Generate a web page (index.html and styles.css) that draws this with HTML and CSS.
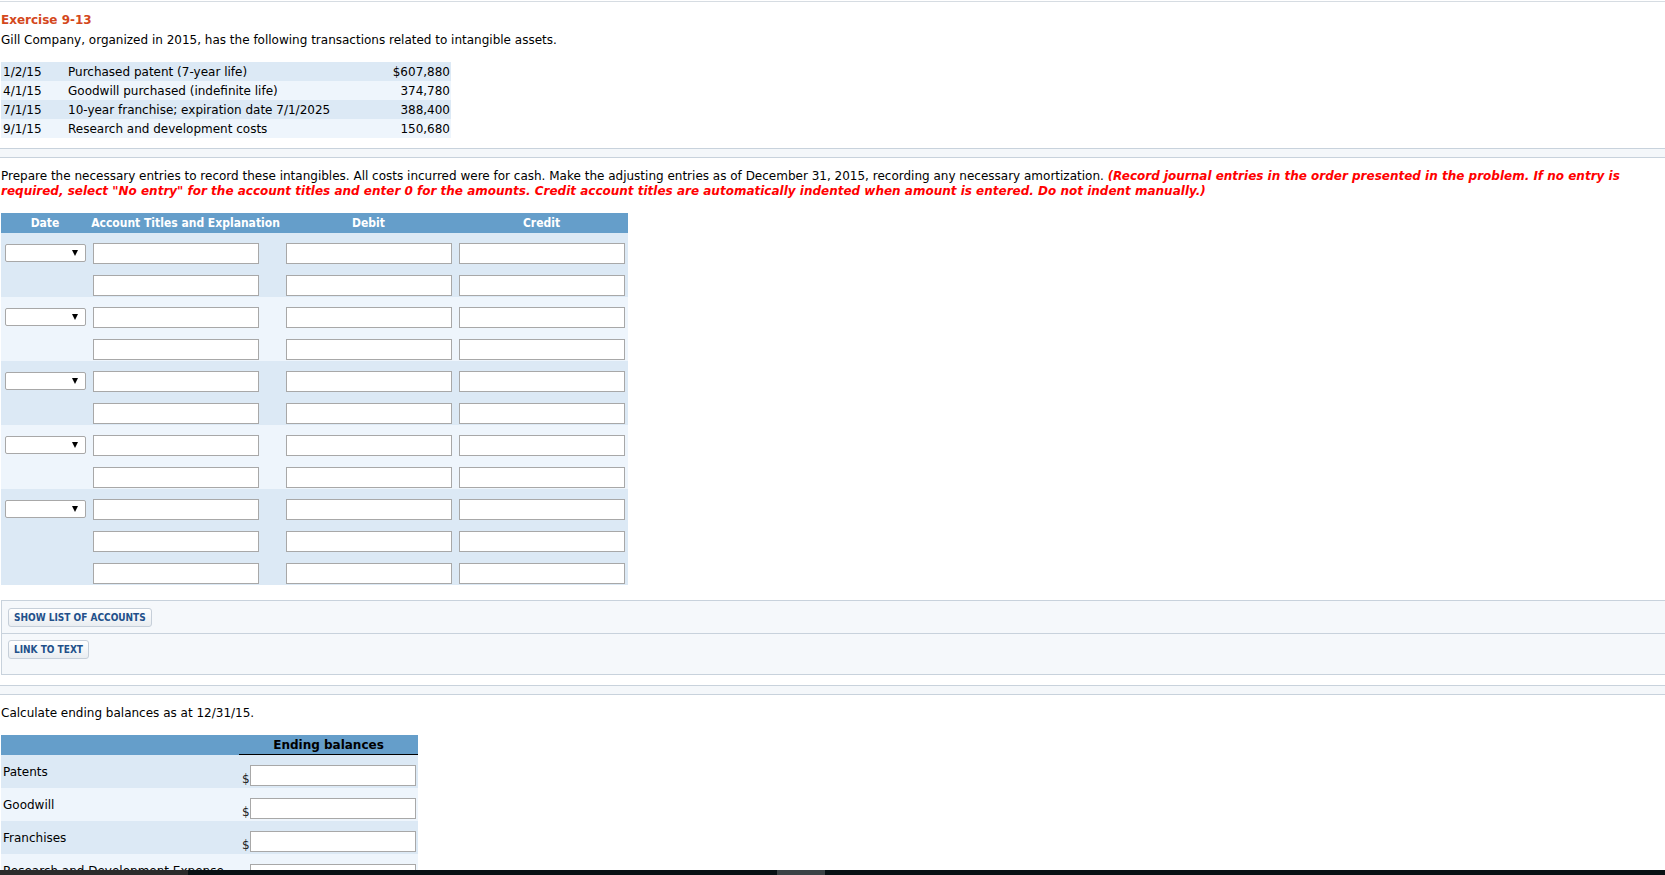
FILE: index.html
```html
<!DOCTYPE html>
<html lang="en">
<head>
  <meta charset="UTF-8" />
  <title>Exercise 9-13</title>
  <link rel="stylesheet" href="styles.css">
</head>
<body>
  <div class="page">
    <div class="top-rule"></div>
    <h1 class="ex-title">Exercise 9-13</h1>
    <p class="lead">Gill Company, organized in 2015, has the following transactions related to intangible assets.</p>

    <table class="facts">
      <tr><td class="f-date">1/2/15</td><td>Purchased patent (7-year life)</td><td class="f-amt">$607,880</td></tr>
      <tr><td class="f-date">4/1/15</td><td>Goodwill purchased (indefinite life)</td><td class="f-amt">374,780</td></tr>
      <tr><td class="f-date">7/1/15</td><td>10-year franchise; expiration date 7/1/2025</td><td class="f-amt">388,400</td></tr>
      <tr><td class="f-date">9/1/15</td><td>Research and development costs</td><td class="f-amt">150,680</td></tr>
    </table>

    <div class="divider"></div>

    <p class="instructions">Prepare the necessary entries to record these intangibles. All costs incurred were for cash. Make the adjusting entries as of December 31, 2015, recording any necessary amortization. <em class="hint">(Record journal entries in the order presented in the problem. If no entry is required, select "No entry" for the account titles and enter 0 for the amounts. Credit account titles are automatically indented when amount is entered. Do not indent manually.)</em></p>

    <table class="journal">
      <thead>
        <tr><th class="c-date">Date</th><th class="c-acct">Account Titles and Explanation</th><th class="c-num">Debit</th><th class="c-num">Credit</th></tr>
      </thead>
      <tbody class="entry">
        <tr><td><span class="pick"><select></select></span></td><td><input type="text"></td><td><input type="text"></td><td><input type="text"></td></tr>
        <tr><td></td><td><input type="text"></td><td><input type="text"></td><td><input type="text"></td></tr>
      </tbody>
      <tbody class="entry alt">
        <tr><td><span class="pick"><select></select></span></td><td><input type="text"></td><td><input type="text"></td><td><input type="text"></td></tr>
        <tr><td></td><td><input type="text"></td><td><input type="text"></td><td><input type="text"></td></tr>
      </tbody>
      <tbody class="entry">
        <tr><td><span class="pick"><select></select></span></td><td><input type="text"></td><td><input type="text"></td><td><input type="text"></td></tr>
        <tr><td></td><td><input type="text"></td><td><input type="text"></td><td><input type="text"></td></tr>
      </tbody>
      <tbody class="entry alt">
        <tr><td><span class="pick"><select></select></span></td><td><input type="text"></td><td><input type="text"></td><td><input type="text"></td></tr>
        <tr><td></td><td><input type="text"></td><td><input type="text"></td><td><input type="text"></td></tr>
      </tbody>
      <tbody class="entry">
        <tr><td><span class="pick"><select></select></span></td><td><input type="text"></td><td><input type="text"></td><td><input type="text"></td></tr>
        <tr><td></td><td><input type="text"></td><td><input type="text"></td><td><input type="text"></td></tr>
        <tr><td></td><td><input type="text"></td><td><input type="text"></td><td><input type="text"></td></tr>
      </tbody>
    </table>

    <div class="tools">
      <div class="tools-row"><button type="button">SHOW LIST OF ACCOUNTS</button></div>
      <div class="tools-row last"><button type="button">LINK TO TEXT</button></div>
    </div>

    <div class="divider"></div>

    <p class="lead calc">Calculate ending balances as at 12/31/15.</p>

    <table class="balances">
      <thead>
        <tr><th class="b-label"></th><th class="b-head">Ending balances</th></tr>
      </thead>
      <tbody>
        <tr><td class="b-label">Patents</td><td class="b-val"><div class="money"><span class="cur">$</span><input type="text"></div></td></tr>
        <tr class="alt"><td class="b-label">Goodwill</td><td class="b-val"><div class="money"><span class="cur">$</span><input type="text"></div></td></tr>
        <tr><td class="b-label">Franchises</td><td class="b-val"><div class="money"><span class="cur">$</span><input type="text"></div></td></tr>
        <tr class="alt"><td class="b-label">Research and Development Expense</td><td class="b-val"><div class="money"><span class="cur">$</span><input type="text"></div></td></tr>
      </tbody>
    </table>
  </div>

  <div class="taskbar">
    <span class="tb-left"></span>
    <span class="tb-gap"></span>
    <span class="tb-thumb"></span>
  </div>
</body>
</html>
```

FILE: styles.css
```css
* {
  box-sizing: border-box;
}
html, body {
  margin: 0;
  height: 100%;
  overflow: hidden;
}
body {
  font-family: Verdana, "DejaVu Sans", sans-serif;
  font-size: 12px;
  line-height: 15px;
  color: #000;
  background-color: #fff;
}
.page {
  padding-top: 1px;
}
.top-rule {
  height: 1px;
  background-color: #d6dce2;
}
.ex-title {
  margin: 11px 0 0;
  padding-left: 1px;
  font-size: 12px;
  line-height: 15px;
  font-weight: bold;
  color: #d4481c;
}
.lead {
  margin: 5px 0 0;
  padding-left: 1px;
}

/* transactions */
.facts {
  margin: 14px 0 0 1px;
  width: 450px;
  border-collapse: collapse;
  table-layout: fixed;
}
.facts td {
  height: 19px;
  padding: 3px 0 1px;
  white-space: nowrap;
}
.facts tr:nth-child(odd) {
  background-color: #dce9f5;
}
.facts tr:nth-child(even) {
  background-color: #eef5fc;
}
.facts .f-date {
  width: 67px;
  padding-left: 2px;
}
.facts .f-amt {
  width: 110px;
  text-align: right;
  padding-right: 1px;
}

.divider {
  margin-top: 10px;
  height: 10px;
  border-top: 1px solid #c8d2dc;
  border-bottom: 1px solid #c8d2dc;
  background-color: #f4f7fa;
}

.instructions {
  margin: 11px 0 0;
  padding: 0 30px 0 1px;
}
.hint {
  font-weight: bold;
  font-style: italic;
  color: #f00;
}

/* journal */
.journal {
  margin: 14px 0 0 1px;
  width: 627px;
  border-collapse: collapse;
  table-layout: fixed;
}
.journal th {
  height: 20px;
  padding: 1px 0 0;
  background-color: #659eca;
  color: #fff;
  font-family: "DejaVu Sans Condensed", "DejaVu Sans", sans-serif;
  font-stretch: condensed;
  font-size: 12px;
  font-weight: bold;
  text-align: center;
  line-height: 19px;
}
.journal .c-date { width: 88px; }
.journal .c-acct { width: 193px; }
.journal .c-num { width: 173px; }
.journal td {
  padding: 10px 4px 1px;
  vertical-align: top;
}
.journal .entry {
  background-color: #dce9f5;
}
.journal .entry.alt {
  background-color: #eef5fc;
}
.journal input {
  display: block;
  width: 166px;
  height: 21px;
  margin: 0;
  border: 1px solid #a8a8a8;
  background-color: #fff;
}
.pick {
  position: relative;
  display: block;
  width: 81px;
  margin-top: 1px;
}
.pick select {
  -webkit-appearance: none;
  appearance: none;
  display: block;
  width: 81px;
  height: 18px;
  margin: 0;
  border: 1px solid #a8a8a8;
  border-radius: 2px;
  background-color: #fff;
}
.pick::after {
  content: "";
  position: absolute;
  right: 8px;
  top: 6px;
  border-left: 3px solid transparent;
  border-right: 3px solid transparent;
  border-top: 6px solid #000;
}

/* buttons panel */
.tools {
  margin: 15px 0 0 1px;
  border: 1px solid #c8d2dc;
  border-right: none;
  background-color: #f5f8fb;
}
.tools-row {
  padding: 7px 6px 6px;
  border-bottom: 1px solid #c8d2dc;
}
.tools-row.last {
  padding: 6px 6px 15px;
  border-bottom: none;
}
.tools button {
  height: 19px;
  padding: 0 5px;
  border: 1px solid #c6cfd9;
  border-radius: 3px;
  background: linear-gradient(#ffffff, #e9edf1);
  color: #22508a;
  font-family: "DejaVu Sans Condensed", "DejaVu Sans", sans-serif;
  font-stretch: condensed;
  font-size: 10px;
  font-weight: bold;
  line-height: 17px;
  cursor: pointer;
}

.calc {
  margin-top: 11px;
}

/* ending balances */
.balances {
  margin: 14px 0 0 1px;
  width: 417px;
  border-collapse: separate;
  border-spacing: 0;
  table-layout: fixed;
}
.balances th {
  height: 20px;
  padding: 1px 0 0;
  background-color: #659eca;
  border-bottom: 1px solid #659eca;
  font-size: 12px;
  font-weight: bold;
  line-height: 18px;
  color: #000;
}
.balances .b-label {
  width: 238px;
}
.balances th.b-head {
  border-bottom-color: #000;
  text-align: center;
}
.balances tbody tr {
  background-color: #dce9f5;
}
.balances tbody tr.alt {
  background-color: #eef5fc;
}
.balances td.b-label {
  padding: 2px 2px 0;
  vertical-align: middle;
  white-space: nowrap;
}
.balances td.b-val {
  padding: 10px 2px 2px 3px;
}
.money {
  display: flex;
  align-items: flex-end;
}
.cur {
  line-height: 13px;
  color: #222;
}
.money input {
  display: block;
  width: 166px;
  height: 21px;
  margin: 0;
  border: 1px solid #a8a8a8;
  background-color: #fff;
}

/* bottom strip of the window */
.taskbar {
  position: fixed;
  left: 0;
  right: 0;
  bottom: 0;
  height: 5px;
  display: flex;
  background-color: #081114;
}
.tb-left {
  width: 188px;
  background-color: #2b2b2b;
}
.tb-gap {
  width: 589px;
}
.tb-thumb {
  width: 48px;
  background-color: #3b4245;
}
```
